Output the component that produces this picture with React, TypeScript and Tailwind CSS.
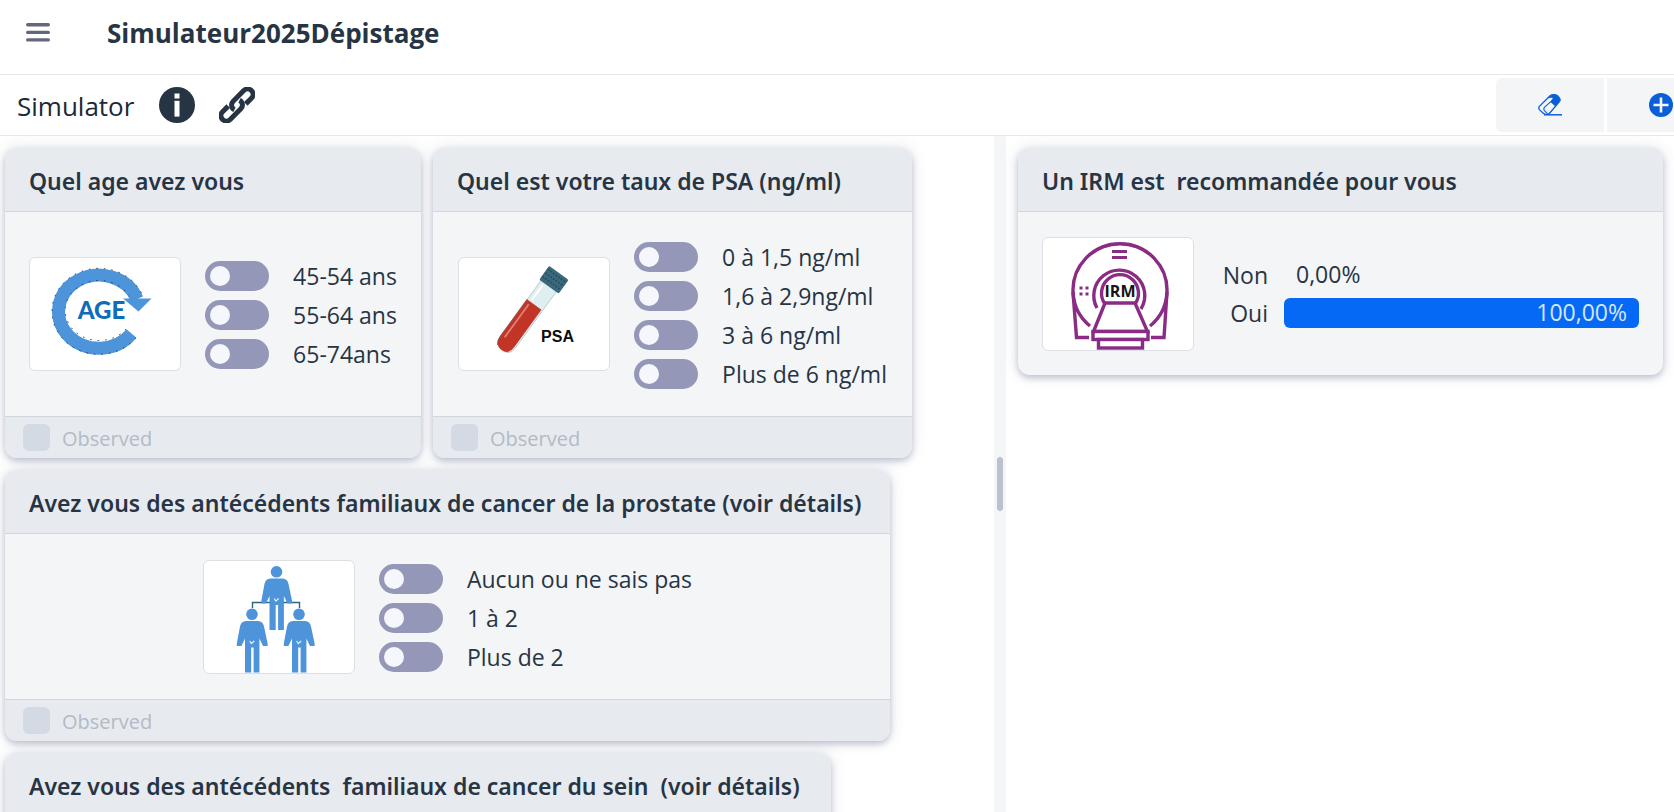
import React, { useState } from "react";

function MenuIcon() {
  return (
    <svg viewBox="0 0 24 20" className="h-5 w-6" fill="#63677a" aria-hidden="true">
      <rect x="0" y="0" width="24" height="3.4" rx="1.7" />
      <rect x="0" y="7.7" width="24" height="3.4" rx="1.7" />
      <rect x="0" y="15.2" width="24" height="3.4" rx="1.7" />
    </svg>
  );
}

function InfoIcon() {
  return (
    <svg viewBox="0 0 36 36" className="size-9" aria-hidden="true">
      <circle cx="18" cy="18" r="18" fill="#273444" />
      <rect x="15.5" y="6.5" width="5" height="5" fill="#fff" />
      <rect x="15.5" y="13.8" width="5" height="15.8" fill="#fff" />
    </svg>
  );
}

function LinkIcon() {
  return (
    <svg viewBox="0 0 36 36" className="size-9" fill="none" stroke="#273444" strokeWidth="5" aria-hidden="true">
      <g transform="rotate(-45 18 18)">
        <path d="M11 12.6 H3 A5.4 5.4 0 0 0 3 23.4 H18 A5.4 5.4 0 0 0 23.2 16.4" />
        <path d="M25 23.4 H33 A5.4 5.4 0 0 0 33 12.6 H18 A5.4 5.4 0 0 0 12.8 19.6" />
      </g>
    </svg>
  );
}

function EraserIcon() {
  return (
    <svg viewBox="0 0 24 22" className="h-[22px] w-6" aria-hidden="true">
      <path
        d="M11.8 2 Q13.2 0.7 15.2 0.7 H16.8 Q18.6 0.8 19.8 2 L21.3 3.8 Q22.8 5.6 21.6 7.4 L11.8 19 Q10.4 20.6 7.6 20.4 Q6.2 20.2 5 19 L1.4 15.6 Q0.2 14 1.4 12.4 Z"
        fill="#f3f5f8"
        stroke="#0a5fd8"
        strokeWidth="1.3"
      />
      <path
        d="M10.6 3.2 Q13 0.7 15.2 0.7 H16.8 Q18.6 0.8 19.8 2 L21.3 3.8 Q22.8 5.6 21.6 7.4 L17.4 12.4 L12.2 7.8 L15 4 Q12.6 3.4 9.4 4.6 Z"
        fill="#0a5fd8"
      />
      <path d="M12.8 7.6 L6.4 13.4 Q5.2 14.8 6.2 16.4 L9.4 19.6" fill="none" stroke="#0a5fd8" strokeWidth="1.1" />
      <path d="M6 20.8 H24" stroke="#0a5fd8" strokeWidth="1.5" />
    </svg>
  );
}

function PlusIcon() {
  return (
    <svg viewBox="0 0 24 24" className="size-6" aria-hidden="true">
      <circle cx="12" cy="12" r="12" fill="#0a5fd8" />
      <path d="M12 4.5 V19.5 M4.5 12 H19.5" stroke="#f3f5f8" strokeWidth="2.6" />
    </svg>
  );
}

function AgePicture() {
  return (
    <svg viewBox="0 0 150 112" className="h-full w-full" role="img" aria-label="Age">
      <path d="M101.5 75.5 A40.5 36.5 0 1 1 107 41" fill="none" stroke="#4d94da" strokeWidth="13" />
      <path d="M93 40.5 L121.5 40.5 L108.5 53.5 Z" fill="#4d94da" />
      <path
        d="M105.8 80 A47 43 0 1 1 112 36"
        fill="none"
        stroke="#1c3a5c"
        strokeWidth="1"
        strokeDasharray="1.5 6"
      />
      <path
        d="M96 71 A34 30 0 1 1 99 38"
        fill="none"
        stroke="#1c3a5c"
        strokeWidth="1"
        strokeDasharray="1.5 6"
      />
      <text x="71.5" y="61" textAnchor="middle" fontFamily="Lato, sans-serif" fontWeight="900" fontSize="24" fill="#0f6db8">
        AGE
      </text>
    </svg>
  );
}

function PsaPicture() {
  return (
    <svg viewBox="0 0 150 112" className="h-full w-full" role="img" aria-label="PSA">
      <g transform="rotate(36 94 23)">
        <path d="M84 28 H103 V99 Q103 109 93.5 109 Q84 109 84 99 Z" fill="#dfeef0" stroke="#b4c6ca" strokeWidth="0.8" />
        <path d="M84 53 H101.5 V99 Q101.5 109 93.5 109 Q84 109 84 99 Z" fill="#c23526" />
        <path d="M84 53 V99 Q84 104 87 107" fill="none" stroke="#a04a40" strokeWidth="1.2" />
        <path d="M88 56 V97" stroke="#de8277" strokeWidth="1.8" />
        <path d="M88 32 V51" stroke="#fff" strokeWidth="1.8" />
        <rect x="82" y="13" width="24" height="17" rx="1.5" fill="#39697a" />
        <path d="M83 16.5 H105 M83 21 H105 M83 25.5 H105" stroke="#23485a" strokeWidth="1.4" strokeDasharray="1.6 1.6" />
      </g>
      <text x="98.5" y="84" textAnchor="middle" fontFamily="Liberation Sans, sans-serif" fontWeight="700" fontSize="16" fill="#0c0c0c">
        PSA
      </text>
    </svg>
  );
}

function Person({ x, y }: { x: number; y: number }) {
  return (
    <g transform={`translate(${x} ${y})`} fill="#4d94da">
      <circle cx="0" cy="5.8" r="5.8" />
      <path d="M-6 12.6 H6 Q11 13 12 18 L15.6 35 V37.6 H11 L7.4 30 V64 H1.6 V39 H-0.8 V64 H-7 V30 L-10.6 37.6 H-15.2 V35 L-12 18 Q-11 13 -6 12.6 Z" />
      <path d="M-2.4 32.5 L-0.6 35 L2.2 32.5" fill="none" stroke="#e6f0fa" strokeWidth="1.2" />
    </g>
  );
}

function FamilyPicture() {
  return (
    <svg viewBox="0 0 150 112" className="h-full w-full" role="img" aria-label="Famille">
      <path d="M48.5 47 V41.5 H95.5 V47" fill="none" stroke="#2d6577" strokeWidth="1.4" />
      <Person x={72.5} y={5} />
      <Person x={48} y={47.5} />
      <Person x={95} y={47.5} />
    </svg>
  );
}

function MriPicture() {
  return (
    <svg viewBox="0 0 150 112" className="h-full w-full" role="img" aria-label="IRM">
      <g fill="none" stroke="#8a2c84" strokeWidth="3.4">
        <path d="M47 88 A47 46.5 0 1 1 107 88" />
        <path d="M30 54 L33.5 99.5 H46 M124 54 L121 99.5 H108" />
        <path d="M54 70 A25.5 25.5 0 1 1 98 71" />
        <path d="M62 66 A18.5 18.5 0 1 1 92 66" />
        <path d="M62 65 H92 L104.5 93.5 H50.5 Z" fill="#fff" />
        <rect x="50" y="93.5" width="55" height="8" fill="#fff" />
        <rect x="55.5" y="101.5" width="44" height="8.5" fill="#fff" />
        <path d="M69 13.5 H84 M69 19.5 H84" strokeWidth="2.8" />
      </g>
      <path d="M36.5 50 H39.5 M42.5 50 H45.5 M36.5 56 H39.5 M42.5 56 H45.5" stroke="#8a2c84" strokeWidth="3" />
      <text x="77" y="59" textAnchor="middle" fontFamily="Open Sans, sans-serif" fontWeight="700" fontSize="16" fill="#141414">
        IRM
      </text>
    </svg>
  );
}

const cardClass =
  "flex flex-col overflow-hidden rounded-xl bg-[#f3f5f7] shadow-[0_3px_6px_rgba(60,72,110,0.28),0_0_16px_rgba(60,72,110,0.14)]";

function CardTitle({ children }: { children: React.ReactNode }) {
  return (
    <h2 className="border-b border-[#cfd6de] bg-[#e7eaef] px-6 pt-[17px] pb-[14px] font-['Noto_Sans',sans-serif] text-[23px] leading-8 font-semibold whitespace-pre">
      {children}
    </h2>
  );
}

function PictureFrame({ children }: { children: React.ReactNode }) {
  return (
    <div className="h-[114px] w-[152px] shrink-0 rounded-md border border-[#dcdfe3] bg-white">{children}</div>
  );
}

function Toggle({ label }: { label: string }) {
  return (
    <label className="flex h-[39px] items-center gap-6 pt-0.5 whitespace-nowrap">
      <input
        type="checkbox"
        className="h-[30px] w-16 shrink-0 appearance-none rounded-full bg-[#9597b8] p-[5px] before:block before:size-5 before:rounded-full before:bg-[#f5f7fc] checked:bg-[#0569f5] checked:before:ml-auto"
      />
      {label}
    </label>
  );
}

type QuestionProps = {
  title: string;
  picture?: React.ReactNode;
  options?: string[];
  className: string;
};

function Question({ title, picture, options, className }: QuestionProps) {
  return (
    <section className={`${cardClass} ${className}`}>
      <CardTitle>{title}</CardTitle>
      <div className="flex grow items-center justify-center gap-6 p-6">
        {picture && <PictureFrame>{picture}</PictureFrame>}
        <div>
          {options?.map((option) => (
            <Toggle key={option} label={option} />
          ))}
        </div>
      </div>
      {options && (
        <label className="flex h-[42px] items-center gap-3 border-t border-[#cfd6de] bg-[#e7eaef] px-[18px] text-xl text-[#b4bac6]">
          <input type="checkbox" disabled className="size-[27px] appearance-none rounded-md bg-[#d3dae3]" />
          <span className="pt-0.5">Observed</span>
        </label>
      )}
    </section>
  );
}

const results = [
  { label: "Non", value: 0 },
  { label: "Oui", value: 100 },
];

function Results() {
  return (
    <div className="flex grow flex-col gap-2">
      {results.map(({ label, value }) => (
        <div key={label} className="flex h-[30px] items-center gap-4">
          <span className="w-[46px] text-right">{label}</span>
          <div className="h-full grow">
            <div
              className={
                value > 50
                  ? "flex h-full items-center justify-end rounded-md bg-[#0569f5] px-3 pb-0.5 text-[#d5e6fb]"
                  : "flex h-full items-center px-3 pb-0.5"
              }
              style={{ width: value > 50 ? `${value}%` : undefined }}
            >
              {value.toFixed(2).replace(".", ",")}%
            </div>
          </div>
        </div>
      ))}
    </div>
  );
}

export default function App() {
  const [menuOpen, setMenuOpen] = useState(false);
  return (
    <div className="flex h-screen flex-col overflow-hidden bg-white font-['Open_Sans','Noto_Sans',sans-serif] text-[23px] leading-8 text-[#273444]">
      <header className="flex h-[75px] shrink-0 items-center gap-[57px] border-b border-[#e6e8ea] px-[26px] pb-2">
        <button type="button" aria-label="Menu" aria-expanded={menuOpen} onClick={() => setMenuOpen(!menuOpen)}>
          <MenuIcon />
        </button>
        <h1 className="text-[26px] font-bold">Simulateur2025Dépistage</h1>
      </header>
      <div className="flex h-[61px] shrink-0 items-center border-b border-[#e6e8ea] pl-[17px]">
        <h2 className="pt-0.5 text-[26px] text-[#1c2937]">Simulator</h2>
        <button type="button" aria-label="Information" className="ml-[25px]">
          <InfoIcon />
        </button>
        <a href="#lien" aria-label="Lien" className="ml-6">
          <LinkIcon />
        </a>
        <div className="-mr-[41px] ml-auto flex gap-[3px]">
          <button type="button" aria-label="Effacer" className="flex h-[54px] w-[108px] items-center justify-center rounded-l-md bg-[#f3f5f7]">
            <EraserIcon />
          </button>
          <button type="button" aria-label="Ajouter" className="flex h-[54px] w-[108px] items-center justify-center bg-[#f3f5f7]">
            <PlusIcon />
          </button>
        </div>
      </div>
      <main className="grid min-h-0 grow grid-cols-[994fr_12px_668fr]">
        <div className="flex flex-wrap content-start gap-3 overflow-hidden py-3 pl-[5px]">
          <Question
            title="Quel age avez vous"
            picture={<AgePicture />}
            options={["45-54 ans", "55-64 ans", "65-74ans"]}
            className="min-w-[416px]"
          />
          <Question
            title="Quel est votre taux de PSA (ng/ml)"
            picture={<PsaPicture />}
            options={["0 à 1,5 ng/ml", "1,6 à 2,9ng/ml", "3 à 6 ng/ml", "Plus de 6 ng/ml"]}
            className="min-w-[479px]"
          />
          <Question
            title="Avez vous des antécédents familiaux de cancer de la prostate (voir détails)"
            picture={<FamilyPicture />}
            options={["Aucun ou ne sais pas", "1 à 2", "Plus de 2"]}
            className="min-w-[885px]"
          />
          <Question
            title="Avez vous des antécédents  familiaux de cancer du sein  (voir détails)"
            className="min-w-[826px]"
          />
        </div>
        <div className="flex flex-col items-center bg-[#f3f5f7] pt-5" role="separator" aria-orientation="vertical">
          <div className="my-auto flex h-[54px] w-1.5 rounded-full bg-[#bbc1cd]" />
        </div>
        <div className="overflow-hidden py-3 pr-[11px] pl-3">
          <section className={cardClass}>
            <CardTitle>{"Un IRM est  recommandée pour vous"}</CardTitle>
            <div className="flex min-h-[163px] items-center gap-7 p-6">
              <PictureFrame>
                <MriPicture />
              </PictureFrame>
              <Results />
            </div>
          </section>
        </div>
      </main>
    </div>
  );
}
